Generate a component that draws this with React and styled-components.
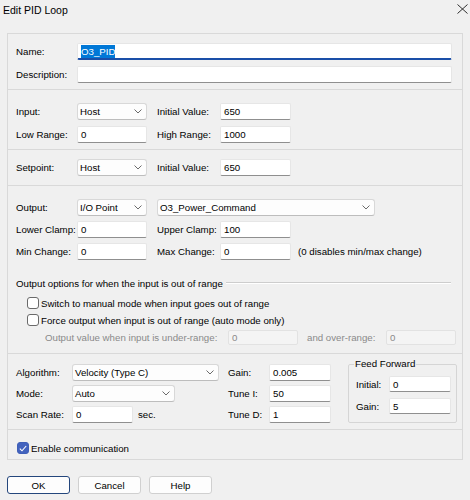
import React from 'react';
import styled, { createGlobalStyle } from 'styled-components';

const Global = createGlobalStyle`
  html, body { margin: 0; padding: 0; background: #f0f0f0; }
  body { font-family: "Liberation Sans", Arial, sans-serif; font-size: 9.7px; color: #000; }
  * { box-sizing: border-box; }
`;

const Dialog = styled.div`
  width: 470px;
  height: 500px;
  background: #f0f0f0;
  overflow: hidden;
`;

const TitleBar = styled.div`
  height: 33px;
  display: flex;
  justify-content: space-between;
  align-items: flex-start;
  padding: 4px 2px 0 3px;
`;

const Title = styled.div`
  font-size: 10.5px;
  line-height: 13px;
`;

const CloseIcon = styled.svg`
  display: block;
`;

const Panel = styled.div`
  margin-left: 7px;
  width: 456px;
  border: 1px solid #d9d9d9;
`;

const Section = styled.div`
  display: flex;
  flex-direction: column;
  gap: ${p => p.$gap || 0}px;
  padding: ${p => p.$pt}px 0 ${p => p.$pb}px 8px;
  border-top: ${p => (p.$first ? 'none' : '1px solid #d9d9d9')};
`;

const Row = styled.div`
  display: flex;
  align-items: center;
  height: ${p => p.$h || 17}px;
  margin-top: ${p => p.$mt || 0}px;
  margin-left: ${p => p.$ml || 0}px;
`;

const Label = styled.div`
  width: ${p => p.$w}px;
  flex: none;
  white-space: nowrap;
  color: ${p => (p.$disabled ? '#8a8a8a' : '#000')};
  margin-left: ${p => p.$ml || 0}px;
`;

const Field = styled.div`
  width: ${p => p.$w}px;
  height: ${p => p.$h || 17}px;
  flex: none;
  display: flex;
  align-items: center;
  padding-left: 3px;
  background: ${p => (p.$disabled ? '#f4f4f4' : '#fff')};
  border: 1px solid ${p => (p.$disabled ? '#e2e2e2' : '#e6e6e6')};
  border-bottom: ${p =>
    p.$focused ? '2px solid #1a4fa8' : p.$disabled ? '1px solid #e2e2e2' : '1px solid #8f8f8f'};
  border-radius: 2px;
  color: ${p => (p.$disabled ? '#8a8a8a' : '#000')};
  white-space: nowrap;
  margin-left: ${p => p.$ml || 0}px;
`;

const Selected = styled.span`
  background: #0078d7;
  color: #fff;
  padding: 1px 0;
`;

const SelectBox = styled.div`
  width: ${p => p.$w}px;
  height: 17px;
  flex: none;
  display: flex;
  align-items: center;
  justify-content: space-between;
  padding: 0 4px 0 2px;
  background: #fdfdfd;
  border: 1px solid #d8d8d8;
  border-bottom-color: #bdbdbd;
  border-radius: 3px;
  white-space: nowrap;
  margin-left: ${p => p.$ml || 0}px;
`;

const Chevron = () => (
  <svg width="8" height="5" viewBox="0 0 8 5">
    <path d="M0.5 0.5 L4 4 L7.5 0.5" fill="none" stroke="#5a5a5a" strokeWidth="0.9" />
  </svg>
);

const Select = ({ w, ml, children }) => (
  <SelectBox $w={w} $ml={ml}>
    <span>{children}</span>
    <Chevron />
  </SelectBox>
);

const Note = styled.div`
  margin-left: ${p => (p.$ml != null ? p.$ml : 7)}px;
  white-space: nowrap;
`;

const GroupHeader = styled.div`
  display: flex;
  align-items: center;
  height: 12px;
  margin-top: 17px;
  margin-right: 11px;
  gap: 3px;
  white-space: nowrap;
`;

const GroupLine = styled.div`
  flex: 1;
  height: 2px;
  border-top: 1px solid #cdcdcd;
  border-bottom: 1px solid #fff;
`;

const CheckRow = styled.label`
  display: flex;
  align-items: center;
  gap: 2px;
  height: 12px;
  margin-top: ${p => p.$mt || 0}px;
  margin-left: ${p => p.$ml || 0}px;
  white-space: nowrap;
`;

const Box = styled.span`
  width: 12px;
  height: 12px;
  flex: none;
  border-radius: 3px;
  border: 1px solid ${p => (p.$checked ? '#3f5fb8' : '#6a6a6a')};
  background: ${p => (p.$checked ? '#4363be' : '#fff')};
  display: flex;
  align-items: center;
  justify-content: center;
`;

const Checkbox = ({ checked, children, mt, ml }) => (
  <CheckRow $mt={mt} $ml={ml}>
    <Box $checked={checked}>
      {checked && (
        <svg width="8" height="7" viewBox="0 0 8 7">
          <path d="M0.8 3.6 L3 5.8 L7.2 1" fill="none" stroke="#fff" strokeWidth="1.1" />
        </svg>
      )}
    </Box>
    <span>{children}</span>
  </CheckRow>
);

const Columns = styled.div`
  display: flex;
  align-items: flex-start;
`;

const Column = styled.div`
  display: flex;
  flex-direction: column;
  gap: 4px;
  width: ${p => p.$w}px;
  flex: none;
`;

const FeedForward = styled.fieldset`
  margin: -6px 0 0 0;
  width: 109px;
  height: 65px;
  border: 1px solid #d5d5d5;
  border-radius: 2px;
  padding: 6px 5px 0 7px;
  display: flex;
  flex-direction: column;
  gap: 6px;
`;

const Legend = styled.legend`
  padding: 0 1px;
  margin-left: -2px;
  line-height: 12px;
`;

const Buttons = styled.div`
  display: flex;
  gap: 8px;
  margin: 16px 0 0 7px;
`;

const Button = styled.button`
  width: 63px;
  height: 18px;
  padding: 0;
  font: inherit;
  color: #000;
  background: #fdfdfd;
  border: 1px solid ${p => (p.$default ? '#24467c' : '#d0d0d0')};
  border-radius: 3px;
`;

export default function App() {
  return (
    <Dialog>
      <Global />
      <TitleBar>
        <Title>Edit PID Loop</Title>
        <CloseIcon width="11" height="10" viewBox="0 0 11 10">
          <path d="M0.5 0.5 L10.5 9.5 M10.5 0.5 L0.5 9.5" stroke="#1a1a1a" strokeWidth="0.9" fill="none" />
        </CloseIcon>
      </TitleBar>

      <Panel>
        <Section $first $pt={9} $pb={6} $gap={6}>
          <Row>
            <Label $w={61}>Name:</Label>
            <Field $w={375} $focused>
              <Selected>O3_PID</Selected>
            </Field>
          </Row>
          <Row>
            <Label $w={61}>Description:</Label>
            <Field $w={375} />
          </Row>
        </Section>

        <Section $pt={13} $pb={6} $gap={6}>
          <Row>
            <Label $w={61}>Input:</Label>
            <Select w={70}>Host</Select>
            <Label $w={63} $ml={10}>Initial Value:</Label>
            <Field $w={71}>650</Field>
          </Row>
          <Row>
            <Label $w={61}>Low Range:</Label>
            <Field $w={70}>0</Field>
            <Label $w={63} $ml={10}>High Range:</Label>
            <Field $w={71}>1000</Field>
          </Row>
        </Section>

        <Section $pt={9} $pb={9}>
          <Row>
            <Label $w={61}>Setpoint:</Label>
            <Select w={70}>Host</Select>
            <Label $w={63} $ml={10}>Initial Value:</Label>
            <Field $w={71}>650</Field>
          </Row>
        </Section>

        <Section $pt={13} $pb={8}>
          <Row>
            <Label $w={61}>Output:</Label>
            <Select w={70}>I/O Point</Select>
            <Select w={218} ml={10}>O3_Power_Command</Select>
          </Row>
          <Row $mt={5}>
            <Label $w={61}>Lower Clamp:</Label>
            <Field $w={70}>0</Field>
            <Label $w={63} $ml={10}>Upper Clamp:</Label>
            <Field $w={71}>100</Field>
          </Row>
          <Row $mt={5}>
            <Label $w={61}>Min Change:</Label>
            <Field $w={70}>0</Field>
            <Label $w={63} $ml={10}>Max Change:</Label>
            <Field $w={71}>0</Field>
            <Note>(0 disables min/max change)</Note>
          </Row>
          <GroupHeader>
            <span>Output options for when the input is out of range</span>
            <GroupLine />
          </GroupHeader>
          <Checkbox mt={8} ml={11}>Switch to manual mode when input goes out of range</Checkbox>
          <Checkbox mt={5} ml={11}>Force output when input is out of range (auto mode only)</Checkbox>
          <Row $h={15} $mt={4} $ml={29}>
            <Label $w={183} $disabled>Output value when input is under-range:</Label>
            <Field $w={70} $h={15} $disabled>0</Field>
            <Label $w={79} $ml={9} $disabled>and over-range:</Label>
            <Field $w={70} $h={15} $disabled>0</Field>
          </Row>
        </Section>

        <Section $pt={10} $pb={6}>
          <Columns>
            <Column $w={212}>
              <Row>
                <Label $w={56}>Algorithm:</Label>
                <Select w={147}>Velocity (Type C)</Select>
              </Row>
              <Row>
                <Label $w={56}>Mode:</Label>
                <Select w={103}>Auto</Select>
              </Row>
              <Row>
                <Label $w={56}>Scan Rate:</Label>
                <Field $w={61}>0</Field>
                <Note $ml={5}>sec.</Note>
              </Row>
            </Column>
            <Column $w={120}>
              <Row>
                <Label $w={41}>Gain:</Label>
                <Field $w={62}>0.005</Field>
              </Row>
              <Row>
                <Label $w={41}>Tune I:</Label>
                <Field $w={62}>50</Field>
              </Row>
              <Row>
                <Label $w={41}>Tune D:</Label>
                <Field $w={62}>1</Field>
              </Row>
            </Column>
            <FeedForward>
              <Legend>Feed Forward</Legend>
              <Row $h={16}>
                <Label $w={33}>Initial:</Label>
                <Field $w={62} $h={16}>0</Field>
              </Row>
              <Row $h={16}>
                <Label $w={33}>Gain:</Label>
                <Field $w={62} $h={16}>5</Field>
              </Row>
            </FeedForward>
          </Columns>
        </Section>

        <Section $pt={12} $pb={5}>
          <Checkbox checked ml={1}>Enable communication</Checkbox>
        </Section>
      </Panel>

      <Buttons>
        <Button $default>OK</Button>
        <Button>Cancel</Button>
        <Button>Help</Button>
      </Buttons>
    </Dialog>
  );
}
